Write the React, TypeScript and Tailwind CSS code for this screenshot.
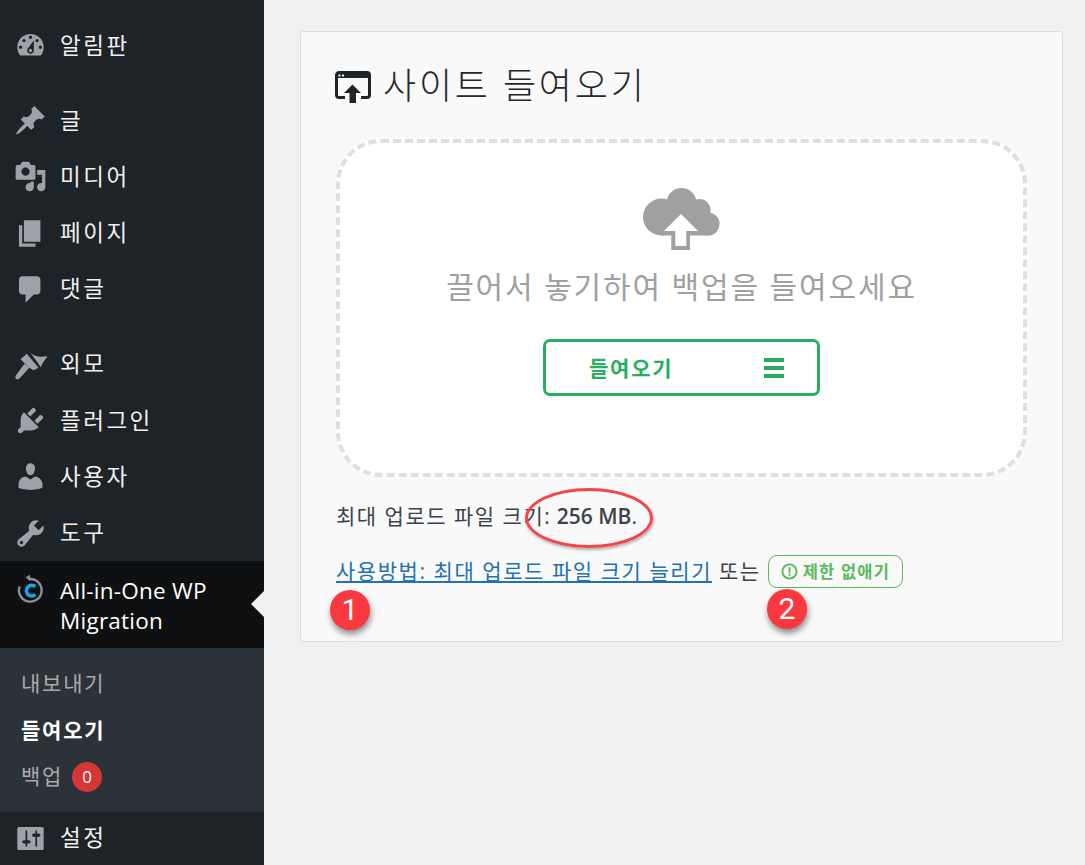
import React from "react";

const P: Record<string, string> = {
  dashboard: "M3.76 16h12.48c1.1-1.37 1.76-3.11 1.76-5 0-4.42-3.58-8-8-8s-8 3.58-8 8c0 1.89.66 3.63 1.76 5zM10 4c.55 0 1 .45 1 1s-.45 1-1 1-1-.45-1-1 .45-1 1-1zM6 6c.55 0 1 .45 1 1s-.45 1-1 1-1-.45-1-1 .45-1 1-1zm8 0c.55 0 1 .45 1 1s-.45 1-1 1-1-.45-1-1 .45-1 1-1zm-5.37 5.55L12 7v6c0 1.1-.9 2-2 2s-2-.9-2-2c0-.57.24-1.08.63-1.45zM4 10c.55 0 1 .45 1 1s-.45 1-1 1-1-.45-1-1 .45-1 1-1zm12 0c.55 0 1 .45 1 1s-.45 1-1 1-1-.45-1-1 .45-1 1-1zm-5 3c0-.55-.45-1-1-1s-1 .45-1 1 .45 1 1 1 1-.45 1-1z",
  post: "M10.44 3.02l1.82-1.82 6.36 6.35-1.83 1.82c-1.05-.68-2.48-.57-3.41.36l-.75.75c-.92.93-1.04 2.35-.35 3.41l-1.83 1.82-2.41-2.41-2.8 2.79c-.42.42-3.38 2.71-3.8 2.29s1.86-3.39 2.28-3.81l2.79-2.79L4.1 9.36l1.83-1.82c1.05.69 2.48.57 3.4-.36l.75-.75c.93-.92 1.05-2.35.36-3.41z",
  media: "M13 11V4c0-.55-.45-1-1-1h-1.67L9 1H5L3.67 3H2c-.55 0-1 .45-1 1v7c0 .55.45 1 1 1h10c.55 0 1-.45 1-1zM7 4.5c1.38 0 2.5 1.12 2.5 2.5S8.38 9.5 7 9.5 4.5 8.38 4.5 7 5.62 4.5 7 4.5zM14 6h5v10.5c0 1.38-1.12 2.5-2.5 2.5S14 17.88 14 16.5s1.12-2.5 2.5-2.5c.17 0 .34.02.5.05V9h-3V6zm-4 8.05V13h2v3.5c0 1.38-1.12 2.5-2.5 2.5S7 17.88 7 16.5 8.12 14 9.5 14c.17 0 .34.02.5.05z",
  page: "M6 15V2h10v13H6zm-1 1h8v2H3V5h2v11z",
  comments: "M5 2h9c1.1 0 2 .9 2 2v7c0 1.1-.9 2-2 2h-2l-5 5v-5H5c-1.1 0-2-.9-2-2V4c0-1.1.9-2 2-2z",
  plugins: "M13.11 4.36L9.87 7.6 8 5.73l3.24-3.24c.35-.34 1.05-.2 1.56.32.52.51.66 1.21.31 1.55zm-8 1.77l.91-1.12 9.01 9.01-1.19.84c-.71.71-2.63 1.16-3.82 1.16H6.14L4.9 17.26c-.59.59-1.54.59-2.12 0-.59-.58-.59-1.53 0-2.12l1.24-1.24v-3.88c0-1.13.4-3.19 1.09-3.89zm7.26 3.97l3.24-3.24c.34-.35 1.04-.21 1.55.31.52.51.66 1.21.31 1.55l-3.24 3.25z",
  users: "M10 9.25c-2.27 0-2.73-3.44-2.73-3.44C7 4.02 7.82 2 9.97 2c2.16 0 2.98 2.02 2.71 3.81 0 0-.41 3.44-2.68 3.44zm0 2.57L12.72 10c2.39 0 4.52 2.33 4.52 4.53v2.49s-3.65 1.13-7.24 1.13c-3.65 0-7.24-1.13-7.24-1.13v-2.49c0-2.25 1.94-4.48 4.47-4.48z",
  tools: "M16.68 9.77c-1.34 1.34-3.3 1.67-4.95.99l-5.41 6.52c-.99.99-2.59.99-3.58 0s-.99-2.59 0-3.57l6.52-5.42c-.68-1.65-.35-3.61.99-4.95 1.28-1.28 3.12-1.62 4.72-1.06l-2.89 2.89 2.82 2.82 2.86-2.87c.53 1.58.18 3.39-1.08 4.65zM3.81 16.21c.4.39 1.04.39 1.43 0 .4-.4.4-1.04 0-1.43-.39-.4-1.03-.4-1.43 0-.39.39-.39 1.03 0 1.43z",
  settings: "M18 16V4c0-.55-.45-1-1-1H3c-.55 0-1 .45-1 1v12c0 .55.45 1 1 1h14c.55 0 1-.45 1-1zM8 11h1c.55 0 1 .45 1 1s-.45 1-1 1H8v1.5c0 .28-.22.5-.5.5s-.5-.22-.5-.5V13H6c-.55 0-1-.45-1-1s.45-1 1-1h1V5.5c0-.28.22-.5.5-.5s.5.22.5.5V11zm5-2h-1c-.55 0-1-.45-1-1s.45-1 1-1h1V5.5c0-.28.22-.5.5-.5s.5.22.5.5V7h1c.55 0 1 .45 1 1s-.45 1-1 1h-1v5.5c0 .28-.22.5-.5.5s-.5-.22-.5-.5V9z",
};

function Dash({ name }: { name: string }) {
  if (name === "appearance") {
    return (
      <svg viewBox="10.5 4.5 99 99" className="w-[33px] h-[33px] shrink-0 fill-[#9ca2a7]">
        <path d="M58 16C68 29 86 34 112 29C102 41 95 50 91 62Z" />
        <path d="M49 22L84 64L70 71L56 64L30 38Z" />
        <path d="M42 52L56 64L27 96C20 102 11 96 16 87Z" />
      </svg>
    );
  }
  return (
    <svg viewBox="0 0 20 20" className="w-[33px] h-[33px] shrink-0 fill-[#9ca2a7]">
      <path fillRule="evenodd" d={P[name]} />
    </svg>
  );
}

function Item({ icon, label, className = "" }: { icon: string; label: string; className?: string }) {
  return (
    <div className={"h-[56.25px] shrink-0 flex items-center pl-[13.5px] gap-[13.5px] text-[#f0f0f1] tracking-[2.5px] " + className}>
      <Dash name={icon} />
      <span>{label}</span>
    </div>
  );
}

function Badge({ n, className }: { n: string; className: string }) {
  return (
    <div
      className={
        "absolute w-10 h-10 rounded-full bg-[#f9393f] text-white text-[30px] flex items-center justify-center shadow-[1px_4px_6px_rgba(0,0,0,0.45)] font-['Roboto',sans-serif] " +
        className
      }
    >
      {n}
    </div>
  );
}

export default function App() {
  return (
    <div className="relative flex w-[1085px] h-[865px] overflow-hidden bg-[#f0f0f1] text-[22.5px] leading-[30px] font-['Open_Sans','Noto_Sans_CJK_KR',sans-serif]">
      <aside className="w-[264px] shrink-0 bg-[#1d2327] pt-[17.5px] flex flex-col">
        <Item icon="dashboard" label="알림판" />
        <Item icon="post" label="글" className="mt-[18.75px]" />
        <Item icon="media" label="미디어" />
        <Item icon="page" label="페이지" />
        <Item icon="comments" label="댓글" />
        <Item icon="appearance" label="외모" className="mt-[18.75px]" />
        <Item icon="plugins" label="플러그인" />
        <Item icon="users" label="사용자" />
        <Item icon="tools" label="도구" />
        <div className="relative h-[87px] shrink-0 bg-[#0f1011] flex items-start pl-[10px] pt-[7px] gap-[10px] text-white">
          <svg viewBox="0 0 120 120" className="w-10 h-10 shrink-0">
            <path d="M60 33A34 34 0 1 1 29 55" fill="none" stroke="#8b9095" strokeWidth="7" />
            <path d="M60 20V40L47 28Z" fill="#8b9095" />
            <path d="M76 80A16 16 0 1 1 76 56" fill="none" stroke="#17a5e2" strokeWidth="11" />
          </svg>
          <span className="w-[180px] mt-[8px] tracking-[0.25px]">All-in-One WP Migration</span>
          <div className="absolute right-0 top-[30px] w-0 h-0 border-y-[13px] border-y-transparent border-r-[13px] border-r-[#f0f0f1]" />
        </div>
        <div className="h-[164px] shrink-0 bg-[#2c3338] pl-[21px] pt-[20px] text-[21px] text-[#a7aaad] tracking-[1.75px]">
          <div className="h-[46.5px]">내보내기</div>
          <div className="h-[46.5px] font-bold text-white">들여오기</div>
          <div className="flex items-start gap-[9px]">
            <span>백업</span>
            <span className="w-[30px] h-[30px] mt-[1px] rounded-full bg-[#d63638] text-white text-[17px] tracking-normal flex items-center justify-center">0</span>
          </div>
        </div>
        <Item icon="settings" label="설정" className="-mt-[2px]" />
      </aside>

      <main className="flex-1 pl-9 pt-[31px]">
        <section className="w-[763px] h-[611px] bg-[#f9f9f9] border border-[#dcdcde] rounded-[3px] pl-[35px] pr-[35px] pt-[30px]">
          <div className="flex items-center gap-[12px] h-[48px] -ml-px">
            <svg viewBox="0 0 36 32" className="w-[36px] h-[32px] shrink-0 mt-[2px]">
              <path d="M10 26.5H4a2.5 2.5 0 0 1-2.5-2.5V4A2.5 2.5 0 0 1 4 1.5h28A2.5 2.5 0 0 1 34.5 4v20a2.5 2.5 0 0 1-2.5 2.5h-6" fill="none" stroke="#1d2327" strokeWidth="3" />
              <rect x="2" y="2" width="32" height="5" fill="#1d2327" />
              <rect x="3.5" y="3.5" width="2" height="2" fill="#f9f9f9" />
              <rect x="7" y="3.5" width="2" height="2" fill="#f9f9f9" />
              <path d="M17.5 13.5L26 22H21V32H14.5V22H9z" fill="#1d2327" />
            </svg>
            <h1 className="text-[36px] leading-[48px] text-[#23282d] font-light tracking-[2.8px]">사이트 들여오기</h1>
          </div>
          <div className="mt-[29px] w-[691px] h-[338px] bg-white border-[4px] border-dashed border-[#dfdfdf] rounded-[45px] flex flex-col items-center pt-[45px]">
            <svg viewBox="0 0 77 62" className="w-[77px] h-[62px]">
              <g fill="#a0a0a0">
                <circle cx="18.5" cy="29" r="18.5" />
                <circle cx="38.5" cy="15" r="15" />
                <circle cx="56.5" cy="22" r="11" />
                <circle cx="65" cy="36" r="11.5" />
                <rect x="18" y="22" width="47" height="25.5" />
                <rect x="28.3" y="42" width="18.7" height="20" />
              </g>
              <path d="M38 26L55 43H21z" fill="#fff" />
              <rect x="32.3" y="42" width="11" height="16" fill="#fff" />
            </svg>
            <p className="mt-[16px] text-[30px] leading-[42px] text-[#a0a0a0] tracking-[1.85px]">끌어서 놓기하여 백업을 들여오세요</p>
            <div className="mt-[31px] w-[277px] h-[57px] border-[3px] border-[#27ae60] rounded-[7px] flex items-center text-[#27ae60] font-bold text-[21px] pl-[43px]">
              <span className="tracking-[1.75px]">들여오기</span>
              <div className="ml-[91px] w-5 flex flex-col gap-[4px]">
                <i className="block h-[4px] bg-[#27ae60]" />
                <i className="block h-[4px] bg-[#27ae60]" />
                <i className="block h-[4px] bg-[#27ae60]" />
              </div>
            </div>
          </div>
          <p className="mt-[24px] text-[21px] leading-[30px] text-[#3c434a]">
            <span className="tracking-[1.5px]">최대 업로드 파일 크기:</span> <b className="font-semibold">256 MB</b>.
          </p>
          <div className="mt-[22px] flex items-center text-[21px] leading-[30px] text-[#3c434a]">
            <a className="text-[#2271b1] underline tracking-[1.55px]">사용방법: 최대 업로드 파일 크기 늘리기</a>
            <span className="ml-[7px] tracking-[1.5px]">또는</span>
            <span className="ml-[7px] h-[33px] mt-[2px] px-[12px] border border-[#5cb85c] rounded-[9px] flex items-center gap-[5px] text-[#5cb85c] text-[16.5px] font-semibold tracking-[1.2px]">
              <svg viewBox="0 0 18 18" className="w-[17px] h-[17px]">
                <circle cx="9" cy="9" r="7.5" fill="none" stroke="#5cb85c" strokeWidth="2" />
                <rect x="8" y="4.5" width="2" height="6" fill="#5cb85c" />
                <rect x="8" y="11.5" width="2" height="2" fill="#5cb85c" />
              </svg>
              제한 없애기
            </span>
          </div>
        </section>
      </main>

      <div className="absolute left-[525px] top-[488px] w-[128px] h-[60px] rounded-[50%] border-[3px] border-[#f5444a] shadow-[1px_2px_3px_rgba(0,0,0,0.3)]" />
      <Badge n="1" className="left-[330px] top-[590px]" />
      <Badge n="2" className="left-[767px] top-[589px]" />
    </div>
  );
}
